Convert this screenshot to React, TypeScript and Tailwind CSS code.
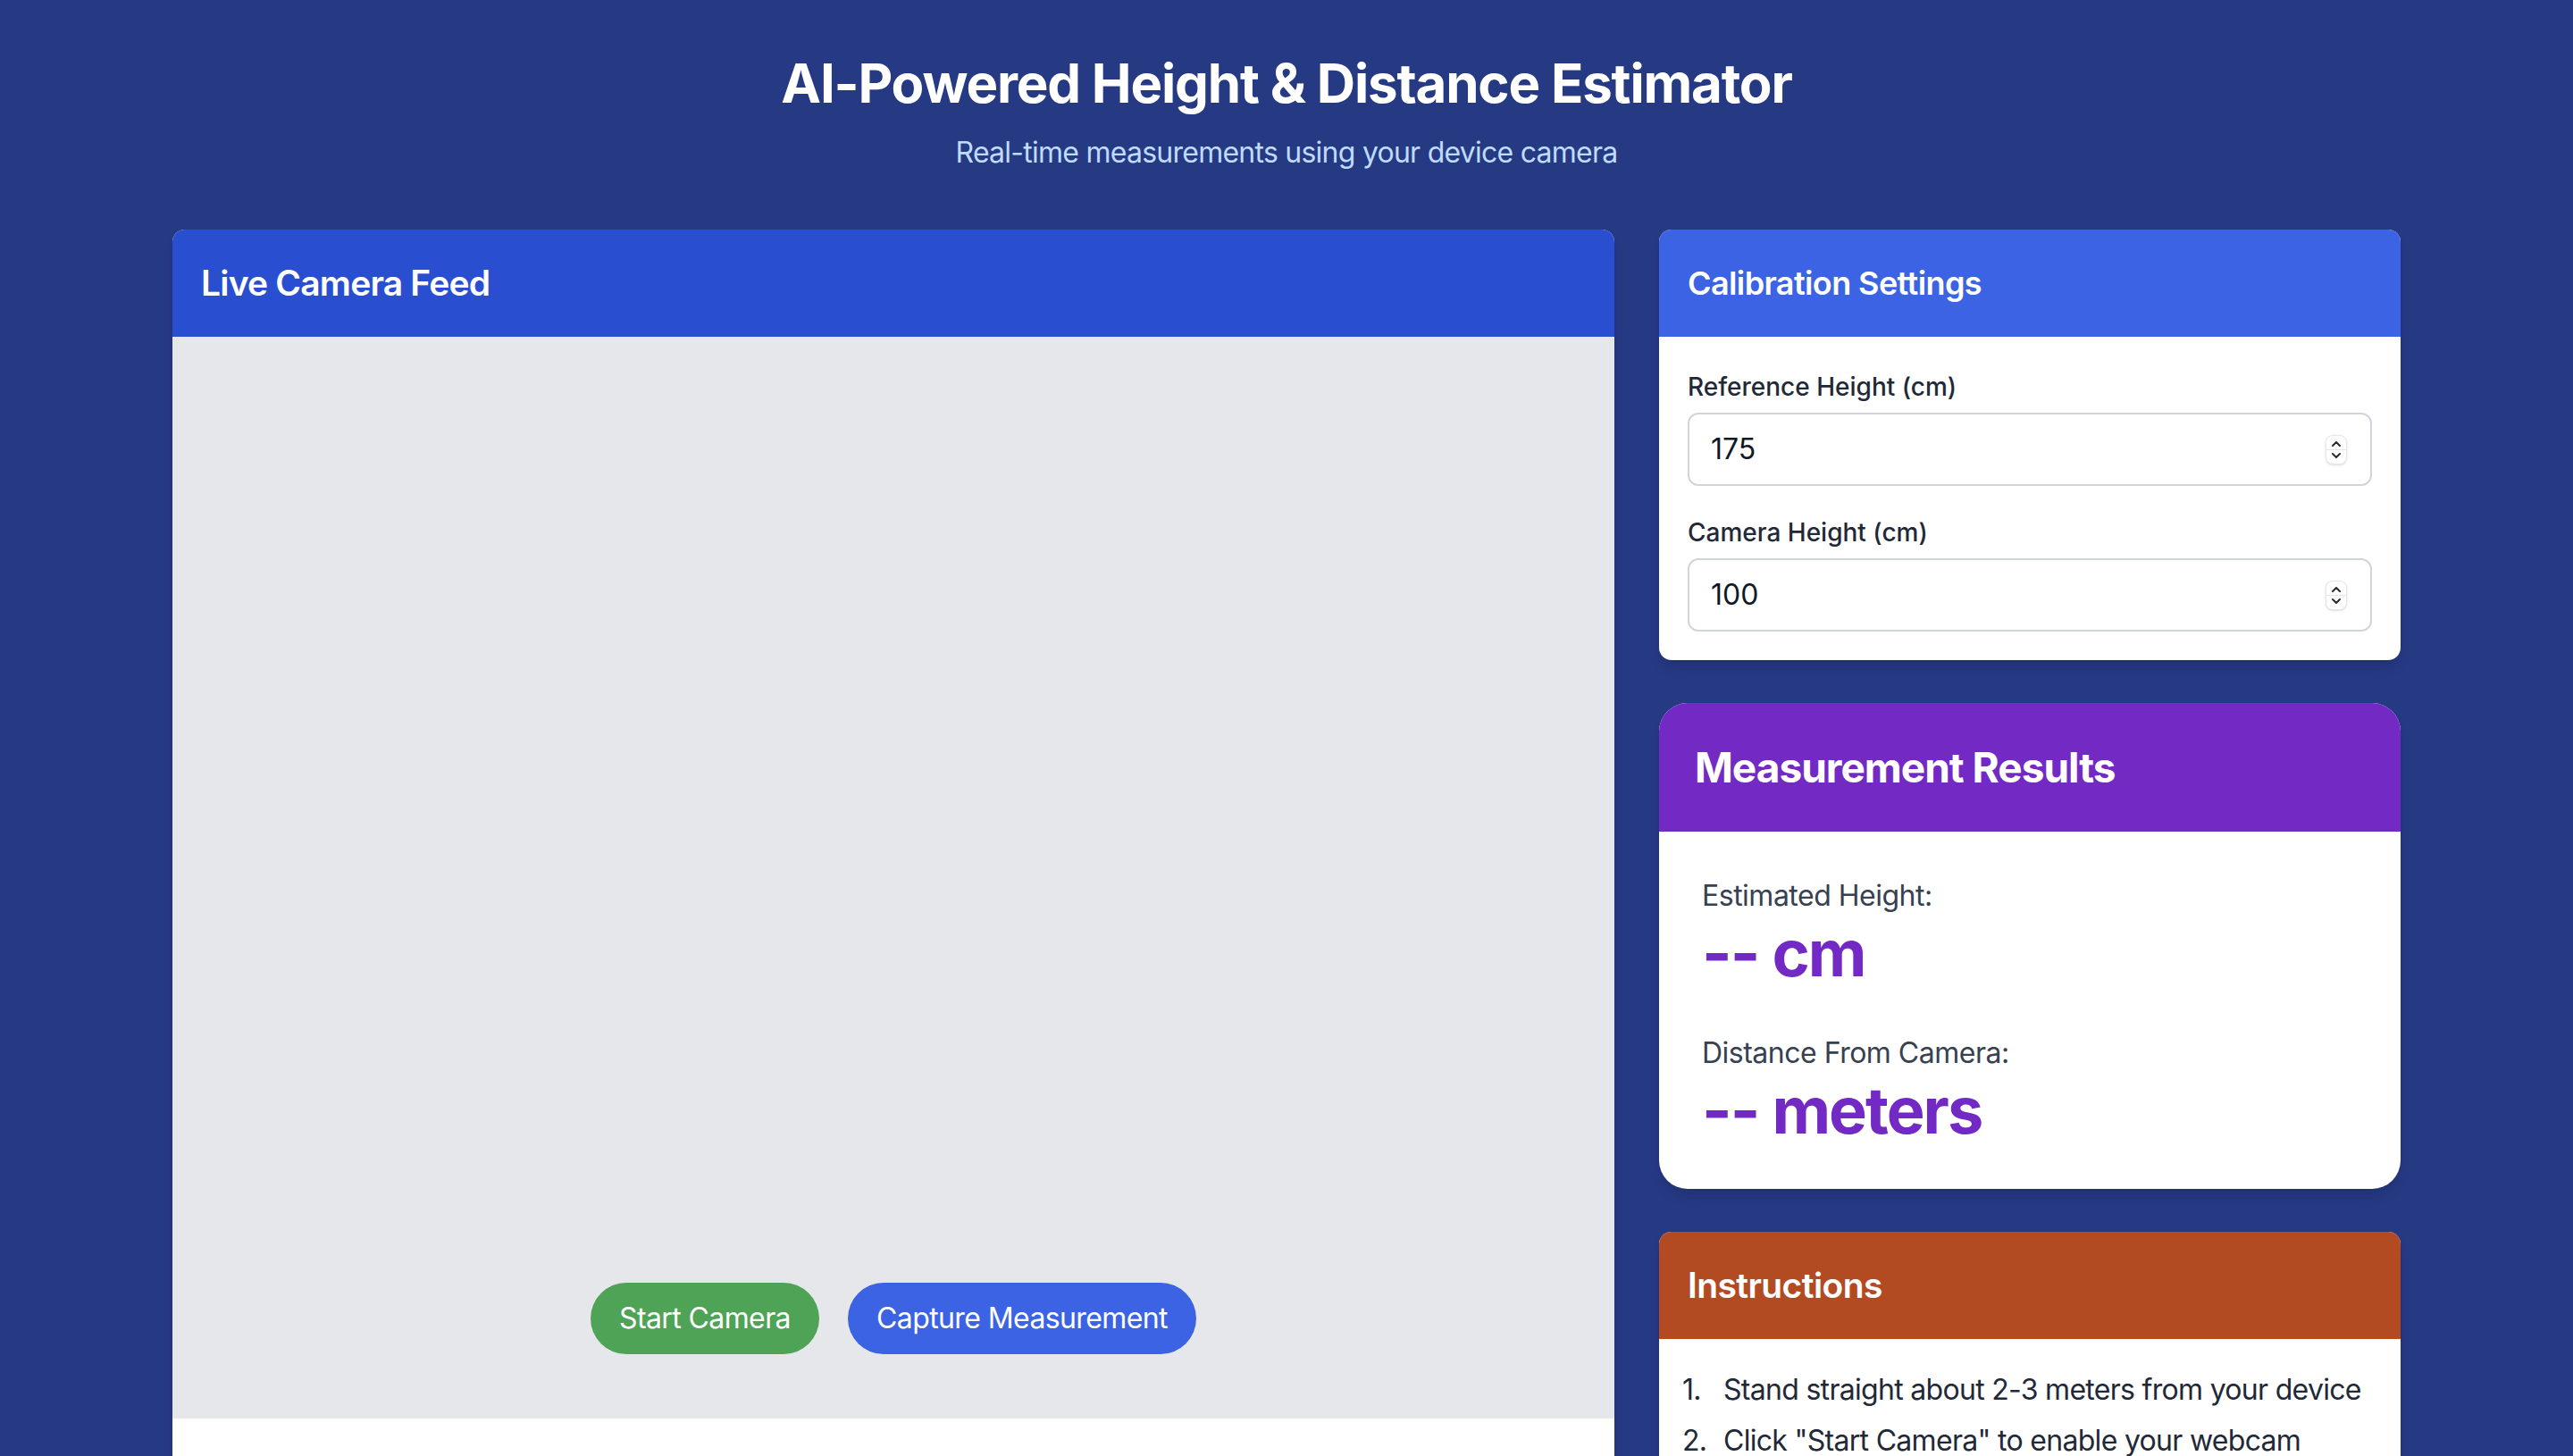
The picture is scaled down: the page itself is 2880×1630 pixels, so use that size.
import React from "react";

const STEPS = [
  "Stand straight about 2-3 meters from your device",
  'Click "Start Camera" to enable your webcam',
  "Make sure your full body is visible in the frame",
  'Press "Capture Measurement" to get your results',
];

function Spinner() {
  return (
    <div className="flex h-[33px] w-[24px] flex-col items-center justify-center rounded-[8px] border border-[#e5e7eb] bg-white shadow-sm">
      <svg width="14" height="10" viewBox="0 0 14 10" className="mb-[1px]">
        <path d="M3 7 L7 3 L11 7" fill="none" stroke="#2b2b2b" strokeWidth="2" strokeLinecap="round" strokeLinejoin="round" />
      </svg>
      <div className="h-px w-full bg-[#e5e7eb]" />
      <svg width="14" height="10" viewBox="0 0 14 10" className="mt-[1px]">
        <path d="M3 3 L7 7 L11 3" fill="none" stroke="#2b2b2b" strokeWidth="2" strokeLinecap="round" strokeLinejoin="round" />
      </svg>
    </div>
  );
}

function NumberField({ label, value, last }: { label: string; value: string; last?: boolean }) {
  return (
    <div className={last ? "" : "mb-8"}>
      <label className="mb-[9px] block text-[28px] leading-[40px] font-medium text-[#1f2937]">{label}</label>
      <div className="flex h-[82px] items-center justify-between rounded-[12px] border-2 border-[#d1d5db] pl-[24px] pr-[26px] text-[32px] text-[#111827]">
        <span>{value}</span>
        <Spinner />
      </div>
    </div>
  );
}

export default function App() {
  return (
    <div className="min-h-screen bg-[#263983] font-['Inter','Noto_Sans',sans-serif]">
      {/* Header */}
      <div className="pt-[57px] text-center">
        <h1 className="text-[60px] leading-[72px] font-bold tracking-[-1.2px] text-white">
          AI-Powered Height &amp; Distance Estimator
        </h1>
        <p className="mt-[18px] text-[32px] leading-[48px] tracking-[-0.75px] text-[#bfdbfe]">
          Real-time measurements using your device camera
        </p>
      </div>

      <div className="mx-auto mt-[62px] flex w-[2494px] items-start gap-[50px]">
        {/* Camera card */}
        <div className="flex-1 overflow-hidden rounded-[14px] bg-white shadow-lg">
          <div className="bg-[#2a4ed0] px-8 py-8">
            <h2 className="text-[39px] leading-[56px] font-semibold tracking-[-0.8px] text-white">Live Camera Feed</h2>
          </div>
          <div className="relative aspect-[4/3] bg-[#e5e7eb]">
            <div className="absolute inset-x-0 bottom-[72px] flex justify-center gap-8">
              <button className="rounded-full bg-[#4fa356] px-8 py-4 text-[32px] leading-[48px] tracking-[-0.6px] text-white">
                Start Camera
              </button>
              <button className="rounded-full bg-[#3b63e3] px-8 py-4 text-[32px] leading-[48px] tracking-[-0.6px] text-white">
                Capture Measurement
              </button>
            </div>
          </div>
          <div className="h-[120px] bg-white" />
        </div>

        {/* Right column */}
        <div className="flex w-[830px] flex-col gap-12">
          <div className="overflow-hidden rounded-[14px] bg-white shadow-lg">
            <div className="bg-[#3b63e3] px-8 py-8">
              <h2 className="text-[36px] leading-[56px] font-semibold tracking-[-0.6px] text-white">Calibration Settings</h2>
            </div>
            <div className="px-8 pt-[36px] pb-[32px]">
              <NumberField label="Reference Height (cm)" value="175" />
              <NumberField label="Camera Height (cm)" value="100" last />
            </div>
          </div>

          <div className="overflow-hidden rounded-[32px] bg-white shadow-lg">
            <div className="bg-[#7329c4] px-10 py-10">
              <h2 className="text-[46px] leading-[64px] font-bold tracking-[-1px] text-white">Measurement Results</h2>
            </div>
            <div className="p-12">
              <div className="mb-12">
                <p className="text-[32px] leading-[48px] tracking-[-0.5px] text-[#374151]">Estimated Height:</p>
                <p className="text-[72px] leading-[80px] font-bold tracking-[-2px] text-[#7329c4]">-- cm</p>
              </div>
              <div>
                <p className="text-[32px] leading-[48px] tracking-[-0.5px] text-[#374151]">Distance From Camera:</p>
                <p className="text-[72px] leading-[80px] font-bold tracking-[-2px] text-[#7329c4]">-- meters</p>
              </div>
            </div>
          </div>

          <div className="overflow-hidden rounded-[14px] bg-white shadow-lg">
            <div className="bg-[#b34b22] px-8 py-8">
              <h2 className="text-[39px] leading-[56px] font-semibold tracking-[-0.6px] text-white">Instructions</h2>
            </div>
            <div className="pt-[28px] pr-5 pb-8 pl-[26px]">
              <ol className="text-[32px] leading-[57px] tracking-[-0.7px] text-[#1f2937]">
                {STEPS.map((s, i) => (
                  <li key={s} className="flex whitespace-nowrap">
                    <span className="w-[46px] shrink-0">{i + 1}.</span>
                    <span>{s}</span>
                  </li>
                ))}
              </ol>
            </div>
          </div>
        </div>
      </div>
      <div className="h-16" />
    </div>
  );
}
